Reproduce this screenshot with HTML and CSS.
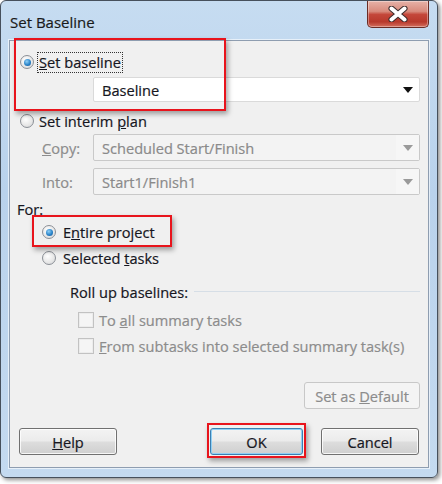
FILE: index.html
```html
<!DOCTYPE html>
<html>
<head>
<meta charset="utf-8">
<link rel="stylesheet" href="styles.css">
</head>
<body>
<div class="window">
  <div class="titlebar">
    <span class="title">Set Baseline</span>
    <div class="close">
      <svg width="24" height="16" viewBox="0 0 24 16">
        <path d="M5.5 2.5 L18.5 13.5 M18.5 2.5 L5.5 13.5" stroke="#3a2a2a" stroke-width="6" stroke-linecap="round"/>
        <path d="M5.5 2.5 L18.5 13.5 M18.5 2.5 L5.5 13.5" stroke="#ffffff" stroke-width="4" stroke-linecap="round"/>
      </svg>
    </div>
  </div>
  <div class="client">
    <div class="row r-setbase">
      <span class="radio checked"></span>
      <span class="label focus"><u>S</u>et baseline</span>
    </div>
    <div class="combo c-base"><span class="ctext">Baseline</span><span class="carrow"></span></div>
    <div class="row r-interim">
      <span class="radio"></span>
      <span class="label">Set interim <u>p</u>lan</span>
    </div>
    <div class="field f-copy">
      <span class="flabel"><u>C</u>opy:</span>
      <div class="combo disabled"><span class="ctext">Scheduled Start/Finish</span><span class="cbtn"><span class="carrow"></span></span></div>
    </div>
    <div class="field f-into">
      <span class="flabel">Into:</span>
      <div class="combo disabled"><span class="ctext">Start1/Finish1</span><span class="cbtn"><span class="carrow"></span></span></div>
    </div>
    <div class="row r-for">For:</div>
    <div class="row r-entire">
      <span class="radio checked"></span>
      <span class="label">E<u>n</u>tire project</span>
    </div>
    <div class="row r-selected">
      <span class="radio"></span>
      <span class="label">Selected <u>t</u>asks</span>
    </div>
    <div class="row r-rollup">
      <span class="label">Roll up baselines:</span>
      <span class="gline"></span>
    </div>
    <div class="row r-cb1">
      <span class="check"></span>
      <span class="label dis">To <u>a</u>ll summary tasks</span>
    </div>
    <div class="row r-cb2">
      <span class="check"></span>
      <span class="label dis"><u>F</u>rom subtasks into selected summary task(s)</span>
    </div>
    <div class="defrow">
      <div class="btn btn-dis"><span>Set as <u>D</u>efault</span></div>
    </div>
    <div class="btnrow">
      <div class="btn b-help"><span><u>H</u>elp</span></div>
      <div class="btn b-ok"><span>OK</span></div>
      <div class="btn b-cancel"><span>Cancel</span></div>
    </div>
    <div class="hl hl-1"></div>
    <div class="hl hl-2"></div>
    <div class="hl hl-3"></div>
  </div>
</div>
</body>
</html>
```
FILE: styles.css
```css
html, body {
  margin: 0;
  padding: 0;
  background: #ffffff;
}
body {
  width: 442px;
  height: 484px;
  overflow: hidden;
  font-family: "Open Sans", "Noto Sans", sans-serif;
  font-size: 14.6px;
  color: #16161e;
  -webkit-text-stroke: 0.2px;
}
.window {
  width: 436px;
  height: 476px;
  border: 1px solid #46505c;
  border-radius: 6px;
  background: linear-gradient(180deg, #c6dcf1 0%, #b9d2ec 40%, #c4daf0 100%);
  box-shadow: 2px 2px 4px rgba(0,0,0,0.45);
  display: flex;
  flex-direction: column;
  position: relative;
}
.titlebar {
  height: 39px;
  display: flex;
  align-items: flex-start;
  justify-content: space-between;
}
.title {
  margin-left: 9px;
  margin-top: 11px;
  font-size: 15px;
  color: #1a1a1a;
}
.close {
  width: 60px;
  height: 26px;
  margin-right: 8px;
  border: 1px solid #6a2c25;
  border-top: none;
  border-radius: 0 0 5px 5px;
  background: linear-gradient(180deg, #e6b2a8 0%, #d88a7c 40%, #c4473a 52%, #b8392c 80%, #d4705f 100%);
  box-shadow: inset 0 0 0 1px rgba(255,255,255,0.35);
  display: flex;
  align-items: center;
  justify-content: center;
}
.client {
  margin-left: 8px;
  width: 418px;
  height: 426px;
  border: 1px solid #8e9db0;
  box-shadow: 0 0 0 1px rgba(255,255,255,0.6);
  background: #f0f0f0;
  display: flex;
  flex-direction: column;
  position: relative;
}
.row {
  display: flex;
  align-items: center;
  height: 20px;
  flex: none;
}
.label { white-space: nowrap; }
.label.dis { color: #8c8c8c; }
.radio {
  width: 14px;
  height: 14px;
  box-sizing: border-box;
  border-radius: 50%;
  border: 1px solid #8b8f96;
  background: radial-gradient(circle at 40% 35%, #ffffff 0%, #e6e6e6 60%, #cfd2d6 100%);
  flex: none;
  position: relative;
}
.radio.checked::after {
  content: "";
  position: absolute;
  left: 2.5px;
  top: 2.5px;
  width: 7px;
  height: 7px;
  border-radius: 50%;
  background: radial-gradient(circle at 40% 35%, #8fd0f7 0%, #2a84c9 55%, #13508f 100%);
}
.check {
  width: 16px;
  height: 16px;
  box-sizing: border-box;
  border: 1px solid #c2c2c2;
  background: #f5f5f5;
  box-shadow: inset 0 0 0 1px #ececec;
  flex: none;
}
.r-setbase { margin-top: 11px; padding-left: 10px; }
.r-setbase .radio { margin-right: 4px; }
.focus {
  outline: 1px dotted #333;
  padding: 0 1px;
  line-height: 19px;
}
.combo {
  display: flex;
  align-items: center;
  box-sizing: border-box;
  border: 1px solid #dadada;
  border-radius: 2px;
  background: #ffffff;
  position: relative;
}
.c-base {
  margin-top: 5px;
  margin-left: 83px;
  width: 327px;
  height: 25px;
  padding-left: 8px;
}
.ctext { flex: 1; white-space: nowrap; }
.carrow {
  width: 0;
  height: 0;
  border-left: 5px solid transparent;
  border-right: 5px solid transparent;
  border-top: 6px solid #111;
  margin-right: 6px;
}
.r-interim { margin-top: 9px; padding-left: 10px; }
.r-interim .radio { margin-right: 5px; }
.field {
  display: flex;
  align-items: center;
  height: 27px;
  flex: none;
}
.f-copy { margin-top: 3px; }
.f-into { margin-top: 7px; }
.flabel {
  width: 51px;
  padding-left: 32px;
  color: #8c8c8c;
}
.combo.disabled {
  width: 327px;
  height: 27px;
  background: #f3f3f3;
  border-color: #c9c9c9;
  color: #8a8a8a;
  padding-left: 8px;
}
.cbtn {
  width: 23px;
  height: 25px;
  display: flex;
  align-items: center;
  justify-content: center;
  background: #f6f6f6;
}
.combo.disabled .carrow {
  border-top-color: #9a9a9a;
  margin-right: 0;
}
.r-for { margin-top: 4px; padding-left: 7px; }
.r-entire { margin-top: 3px; padding-left: 32px; }
.r-entire .radio, .r-selected .radio { margin-right: 7px; }
.r-selected { margin-top: 6px; padding-left: 32px; }
.r-rollup { margin-top: 14px; padding-left: 60px; }
.gline {
  flex: 1;
  height: 1px;
  background: #d6dee6;
  margin-left: 6px;
  margin-right: 8px;
  margin-top: -2px;
}
.r-cb1 { margin-top: 8px; padding-left: 68px; }
.r-cb2 { margin-top: 6px; padding-left: 68px; }
.r-cb1 .check, .r-cb2 .check { margin-right: 5px; }
.defrow {
  margin-top: 26px;
  display: flex;
  justify-content: flex-end;
  padding-right: 8px;
}
.btn {
  height: 27px;
  box-sizing: border-box;
  border: 1px solid #707070;
  border-radius: 3px;
  background: linear-gradient(180deg, #f3f3f3 0%, #ebebeb 48%, #dddddd 52%, #cfcfcf 100%);
  box-shadow: inset 0 0 0 1px rgba(255,255,255,0.8);
  display: flex;
  align-items: center;
  justify-content: center;
  color: #16161e;
  white-space: nowrap;
}
.btn-dis {
  width: 116px;
  background: #f4f4f4;
  border-color: #c8c8c8;
  box-shadow: none;
  color: #8c8c8c;
}
.btnrow {
  margin-top: 19px;
  display: flex;
  padding-left: 9px;
}
.b-help { width: 98px; }
.b-ok {
  width: 93px;
  margin-left: 93px;
  border-color: #3c7fb1;
  box-shadow: inset 0 0 0 1px #8fd0f5;
}
.b-cancel { width: 98px; margin-left: 18px; }
.hl {
  position: absolute;
  border: 2px solid #e8141c;
  box-shadow: 2px 3px 5px rgba(0,0,0,0.35);
  pointer-events: none;
}
.hl-1 { left: 4px; top: -3px; width: 208px; height: 69px; }
.hl-2 { left: 22px; top: 174px; width: 136px; height: 28px; }
.hl-3 { left: 197px; top: 382px; width: 95px; height: 31px; }
```
